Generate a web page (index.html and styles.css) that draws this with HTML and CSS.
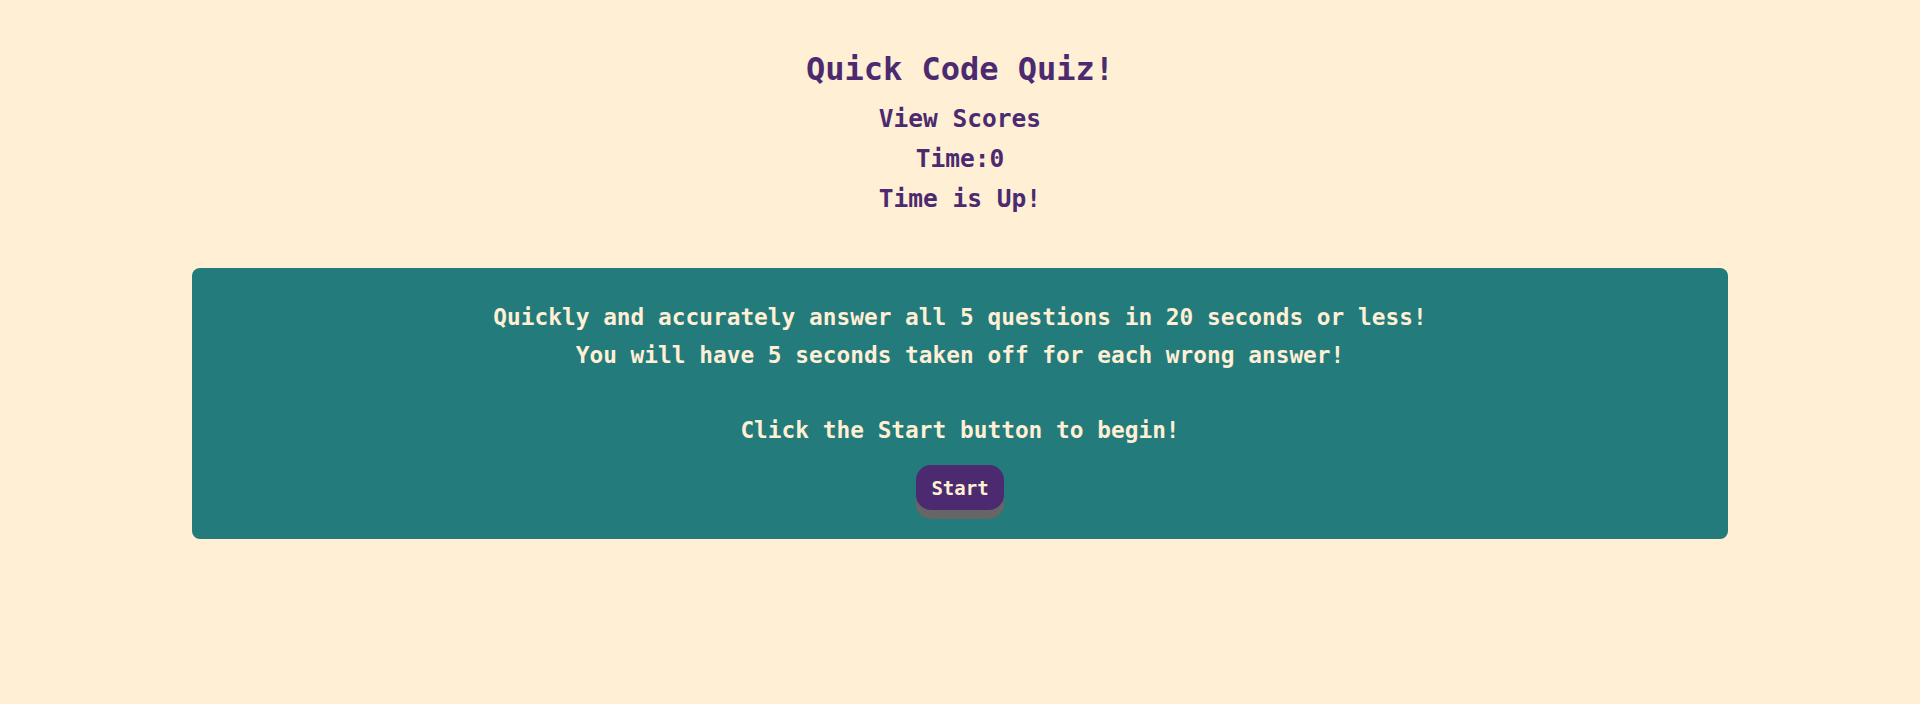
FILE: index.html
```html
<!DOCTYPE html>
<html lang="en">
<head>
<meta charset="utf-8">
<title>Quick Code Quiz!</title>
<link rel="stylesheet" href="styles.css">
</head>
<body>
<header class="top">
  <h1 class="title">Quick Code Quiz!</h1>
  <div class="line">View Scores</div>
  <div class="line">Time:0</div>
  <div class="line">Time is Up!</div>
</header>
<main class="card">
  <p class="intro">Quickly and accurately answer all 5 questions in 20 seconds or less!<br>You will have 5 seconds taken off for each wrong answer!<br><br>Click the Start button to begin!</p>
  <button class="start">Start</button>
</main>
</body>
</html>
```
FILE: styles.css
```css
html, body {
  margin: 0;
  padding: 0;
  background: #ffefd5;
  font-family: "DejaVu Sans Mono", "Liberation Mono", monospace;
  font-weight: bold;
}
.top {
  display: flex;
  flex-direction: column;
  align-items: center;
  padding-top: 49px;
  color: #4b2a70;
}
.title {
  margin: 0 0 10px 0;
  font-size: 32px;
  line-height: 40px;
}
.line {
  font-size: 24.5px;
  line-height: 40px;
}
.card {
  width: 80%;
  box-sizing: border-box;
  margin: 49px auto 0;
  background: #237b7b;
  border-radius: 8px;
  padding: 31px 0 21px;
  display: flex;
  flex-direction: column;
  align-items: center;
  color: #ffefd5;
  height: 271px;
}
.intro {
  margin: 0;
  font-size: 22.8px;
  line-height: 37.5px;
  text-align: center;
}
.start {
  margin-top: 16px;
  font-family: inherit;
  font-weight: bold;
  font-size: 19px;
  color: #ffefd5;
  background: #4b2a70;
  border: none;
  border-radius: 15px;
  width: 88px;
  height: 45px;
  padding: 0;
  box-shadow: 0 9px 0 #666666;
}
```
